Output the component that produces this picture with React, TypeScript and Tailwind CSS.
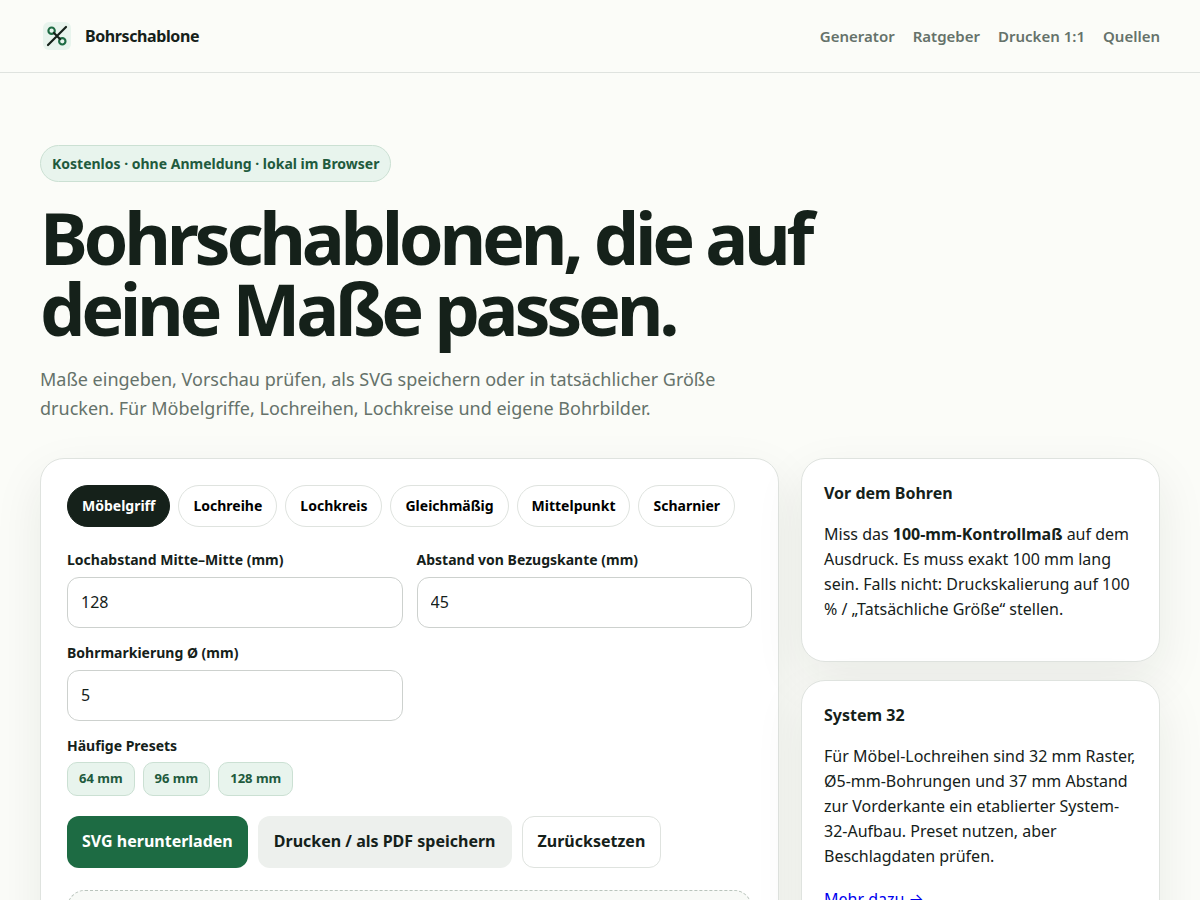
import { useState } from 'react';

const NAV_LINKS = [
  { label: 'Generator', href: '#generator' },
  { label: 'Ratgeber', href: '#ratgeber' },
  { label: 'Drucken 1:1', href: '#drucken' },
  { label: 'Quellen', href: '#quellen' },
];

const MODES = ['Möbelgriff', 'Lochreihe', 'Lochkreis', 'Gleichmäßig', 'Mittelpunkt', 'Scharnier'];

const PRESETS = [64, 96, 128];

const DEFAULTS = { spacing: '128', edge: '45', diameter: '5' };

function Logo() {
  return (
    <svg viewBox="0 0 34 34" className="size-[34px]" fill="none" aria-hidden="true">
      <rect x="3" y="3" width="28" height="28" rx="6" fill="#e8f4ed" />
      <circle cx="11.6" cy="11.7" r="3.2" stroke="#1d6b43" strokeWidth="2.1" />
      <circle cx="22.3" cy="22.3" r="3.2" stroke="#1d6b43" strokeWidth="2.1" />
      <path d="M8 26 26 8M14 14l6 6" stroke="#15211a" strokeWidth="2.2" strokeLinecap="round" />
    </svg>
  );
}

interface FieldProps {
  id: string;
  label: string;
  value: string;
  onChange: (v: string) => void;
}

function Field({ id, label, value, onChange }: FieldProps) {
  return (
    <div className="flex flex-col gap-1.5">
      <label htmlFor={id} className="text-sm leading-[22px] font-bold">
        {label}
      </label>
      <input
        id={id}
        type="text"
        inputMode="decimal"
        value={value}
        onChange={(e) => onChange(e.target.value)}
        className="h-[51px] w-full rounded-xl border border-[#cdd1ce] bg-white px-[13px] pb-0.5 text-base"
      />
    </div>
  );
}

interface InfoCardProps {
  title: string;
  children: React.ReactNode;
}

function InfoCard({ title, children }: InfoCardProps) {
  return (
    <section className="rounded-3xl border border-[#dfe3df] bg-white px-[22px] pt-[22px] pb-[39px] leading-[25px] shadow-[0_18px_50px_rgba(21,33,26,0.08)]">
      <h2 className="mb-4 font-bold">{title}</h2>
      {children}
    </section>
  );
}

export default function App() {
  const [mode, setMode] = useState(MODES[0]);
  const [values, setValues] = useState(DEFAULTS);

  const update = (key: keyof typeof DEFAULTS) => (v: string) => setValues({ ...values, [key]: v });

  return (
    <div className="min-h-screen bg-[#fbfcf8] font-['Noto_Sans','Inter',sans-serif] text-base text-[#15211a]">
      <header className="border-b border-[#dfe3df]">
        <div className="mx-auto flex h-[72px] max-w-[1200px] items-center justify-between px-10">
          <a href="#" className="flex items-center gap-[11px] font-bold tracking-tight">
            <Logo />
            Bohrschablone
          </a>
          <nav className="flex gap-[18px] text-[15px] font-semibold text-[#65726a]">
            {NAV_LINKS.map((link) => (
              <a key={link.href} href={link.href}>
                {link.label}
              </a>
            ))}
          </nav>
        </div>
      </header>

      <main className="mx-auto max-w-[1200px] px-10 pt-[72px] pb-16">
        {/* Hero */}
        <p className="inline-flex h-[37px] items-center rounded-full border border-[#cbe0d3] bg-[#e8f4ed] px-[11px] text-sm font-bold text-[#215a3d]">
          Kostenlos · ohne Anmeldung · lokal im Browser
        </p>
        <h1 className="mt-5 max-w-[850px] text-[72px] leading-[71px] font-bold tracking-[-0.06em]">
          Bohrschablonen, die auf deine Maße passen.
        </h1>
        <p className="mt-[21px] max-w-[720px] text-lg leading-[29px] text-[#65726a]">
          Maße eingeben, Vorschau prüfen, als SVG speichern oder in tatsächlicher Größe drucken. Für
          Möbelgriffe, Lochreihen, Lochkreise und eigene Bohrbilder.
        </p>

        <div className="mt-[35px] grid grid-cols-[minmax(0,1fr)_359px] items-start gap-[22px]">
          {/* Generator */}
          <section
            id="generator"
            className="rounded-3xl border border-[#dfe3df] bg-white p-[26px] shadow-[0_18px_50px_rgba(21,33,26,0.08)]"
          >
            <div className="flex flex-wrap gap-2">
              {MODES.map((m) => (
                <button
                  key={m}
                  type="button"
                  aria-pressed={m === mode}
                  onClick={() => setMode(m)}
                  className={
                    m === mode
                      ? 'h-[42px] rounded-full border border-[#15211a] bg-[#15211a] px-3.5 text-sm font-bold text-white'
                      : 'h-[42px] rounded-full border border-[#dfe3df] bg-white px-3.5 text-sm font-bold text-black'
                  }
                >
                  {m}
                </button>
              ))}
            </div>

            <div className="mt-[22px] grid grid-cols-2 gap-3.5">
              <Field id="spacing" label="Lochabstand Mitte–Mitte (mm)" value={values.spacing} onChange={update('spacing')} />
              <Field id="edge" label="Abstand von Bezugskante (mm)" value={values.edge} onChange={update('edge')} />
              <Field id="diameter" label="Bohrmarkierung Ø (mm)" value={values.diameter} onChange={update('diameter')} />
            </div>

            <h2 className="mt-3.5 text-sm leading-[22px] font-bold">Häufige Presets</h2>
            <div className="mt-[5px] flex flex-wrap gap-2">
              {PRESETS.map((p) => (
                <button
                  key={p}
                  type="button"
                  onClick={() => update('spacing')(String(p))}
                  className="h-[34px] rounded-[10px] border border-[#cbe0d3] bg-[#e8f4ed] px-[11px] text-[13px] font-bold text-[#215a3d]"
                >
                  {p} mm
                </button>
              ))}
            </div>

            <div className="mt-5 flex flex-wrap gap-2.5">
              <button type="button" className="h-[52px] rounded-xl bg-[#1d6b43] px-[15px] pb-0.5 font-bold text-white">
                SVG herunterladen
              </button>
              <button type="button" className="h-[52px] rounded-xl bg-[#edf0ed] px-4 pb-0.5 font-bold">
                Drucken / als PDF speichern
              </button>
              <button
                type="button"
                onClick={() => setValues(DEFAULTS)}
                className="h-[52px] rounded-xl border border-[#dfe3df] bg-white px-[15px] pb-0.5 font-bold"
              >
                Zurücksetzen
              </button>
            </div>

            {/* Preview area */}
            <div className="mt-[22px] min-h-80 rounded-[18px] border border-dashed border-[#b9c4bc] bg-[#f8faf7]" />
          </section>

          <aside className="flex flex-col gap-[18px]">
            <InfoCard title="Vor dem Bohren">
              <p>
                Miss das <strong>100-mm-Kontrollmaß</strong> auf dem Ausdruck. Es muss exakt 100 mm lang sein. Falls
                nicht: Druckskalierung auf 100 % / „Tatsächliche Größe“ stellen.
              </p>
            </InfoCard>
            <InfoCard title="System 32">
              <p>
                Für Möbel-Lochreihen sind 32 mm Raster, Ø5-mm-Bohrungen und 37 mm Abstand zur Vorderkante ein etablierter
                System-32-Aufbau. Preset nutzen, aber Beschlagdaten prüfen.
              </p>
              <p className="mt-[18px]">
                <a href="#ratgeber" className="text-[#0000ee] underline">
                  Mehr dazu →
                </a>
              </p>
            </InfoCard>
          </aside>
        </div>
      </main>
    </div>
  );
}
